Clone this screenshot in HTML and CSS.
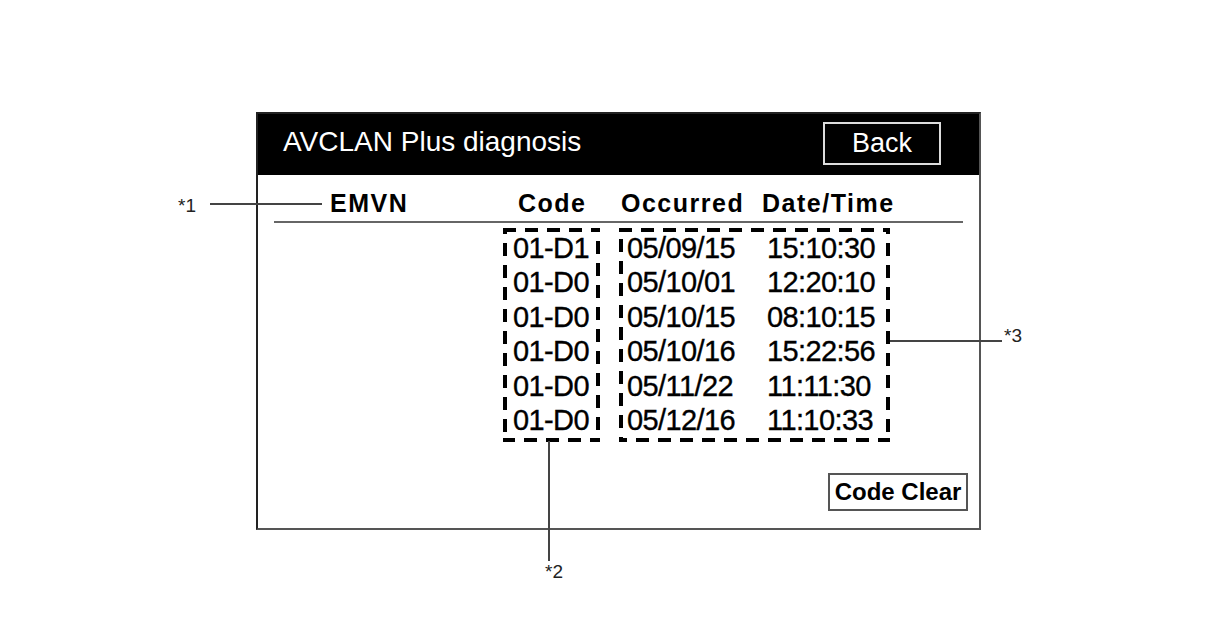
FILE: index.html
```html
<!DOCTYPE html>
<html>
<head>
    <title>AVCLAN Plus diagnosis</title>
    <link rel="stylesheet" href="styles.css">
</head>
<body>
    <div class="page">
        <div class="screen">
            <div class="screen-head">
                <h1 class="screen-title">AVCLAN Plus diagnosis</h1>
                <div class="btn-back">Back</div>
            </div>
            <div class="screen-body">
                <div class="col-heads">
                    <span class="h-emvn">EMVN</span>
                    <span class="h-code">Code</span>
                    <span class="h-occ">Occurred</span>
                    <span class="h-time">Date/Time</span>
                </div>
                <div class="rule"></div>
                <div class="records">
                    <div class="dash-box codes">
                        <svg class="dash-frame"><rect width="100%" height="100%"/></svg>
                        <div class="list">
                            <div>01-D1</div>
                            <div>01-D0</div>
                            <div>01-D0</div>
                            <div>01-D0</div>
                            <div>01-D0</div>
                            <div>01-D0</div>
                        </div>
                    </div>
                    <div class="dash-box stamps">
                        <svg class="dash-frame"><rect width="100%" height="100%"/></svg>
                        <div class="list stamp-grid">
                            <div>05/09/15</div><div>15:10:30</div>
                            <div>05/10/01</div><div>12:20:10</div>
                            <div>05/10/15</div><div>08:10:15</div>
                            <div>05/10/16</div><div>15:22:56</div>
                            <div>05/11/22</div><div>11:11:30</div>
                            <div>05/12/16</div><div>11:10:33</div>
                        </div>
                    </div>
                </div>
                <div class="screen-foot">
                    <div class="btn-clear">Code Clear</div>
                </div>
            </div>
        </div>

        <!-- callouts -->
        <span class="callout-label label-1">*1</span>
        <div class="callout-line line-1"></div>
        <div class="callout-line line-2"></div>
        <span class="callout-label label-2">*2</span>
        <div class="callout-line line-3"></div>
        <span class="callout-label label-3">*3</span>
    </div>
</body>
</html>
```

FILE: styles.css
```css
body {
    margin: 0;
    background: #fff;
    font-family: "Liberation Sans", Arial, sans-serif;
    color: #000;
}
.page {
    position: relative;
    width: 1208px;
    height: 644px;
    overflow: hidden;
}
.screen {
    box-sizing: border-box;
    width: 725px;
    height: 418px;
    margin: 112px 0 0 256px;
    border: 2px solid #222;
    border-right-color: #555;
    border-bottom-color: #555;
    display: flex;
    flex-direction: column;
}
.screen-head {
    height: 61px;
    background: #000;
    display: flex;
    align-items: flex-start;
    justify-content: space-between;
    padding: 0 38px 0 25px;
}
.screen-title {
    margin: 12px 0 0;
    font-size: 28px;
    font-weight: normal;
    line-height: 32px;
    color: #fff;
}
.btn-back {
    box-sizing: border-box;
    width: 118px;
    height: 43px;
    margin-top: 8px;
    border: 2px solid #ddd;
    color: #fff;
    font-size: 27px;
    line-height: 39px;
    text-align: center;
}
.screen-body {
    flex: 1;
    padding-top: 13px;
}
.col-heads {
    display: flex;
    font-size: 25px;
    font-weight: bold;
    letter-spacing: 1.5px;
    line-height: 30px;
    padding-left: 72px;
}
.h-emvn { width: 188px; }
.h-code { width: 103px; }
.h-occ { width: 141px; }
.rule {
    height: 2px;
    margin: 3px 16px 0;
    background: #666;
}
.records {
    display: flex;
    gap: 19px;
    margin: 5px 0 0 245px;
}
.dash-box {
    position: relative;
    box-sizing: border-box;
    height: 214px;
    padding-top: 4px;
}
.dash-frame {
    position: absolute;
    left: 0;
    top: 0;
    width: 100%;
    height: 100%;
    overflow: hidden;
}
.dash-frame rect {
    fill: none;
    stroke: #000;
    stroke-width: 8;
    stroke-dasharray: 13 9;
}
.codes {
    width: 97px;
    padding-left: 10px;
}
.stamps {
    width: 271px;
    padding-left: 8px;
}
.list {
    margin-top: -1px;
    font-size: 29px;
    letter-spacing: -0.6px;
    line-height: 34.4px;
    -webkit-text-stroke: 0.35px #000;
}
.stamp-grid {
    display: grid;
    grid-template-columns: 140px auto;
}
.screen-foot {
    display: flex;
    justify-content: flex-end;
    margin: 31px 11px 0 0;
}
.btn-clear {
    box-sizing: border-box;
    width: 140px;
    height: 38px;
    border: 2px solid #555;
    font-size: 24px;
    font-weight: bold;
    line-height: 34px;
    text-align: center;
}
.callout-label {
    position: absolute;
    font-size: 19px;
    color: #222;
}
.callout-line {
    position: absolute;
    background: #444;
}
.label-1 { left: 178px; top: 195px; }
.label-2 { left: 545px; top: 561px; }
.label-3 { left: 1004px; top: 325px; }
.line-1 { left: 210px; top: 203px; width: 112px; height: 2px; }
.line-2 { left: 548px; top: 441px; width: 2px; height: 120px; }
.line-3 { left: 890px; top: 340px; width: 112px; height: 2px; }
```
